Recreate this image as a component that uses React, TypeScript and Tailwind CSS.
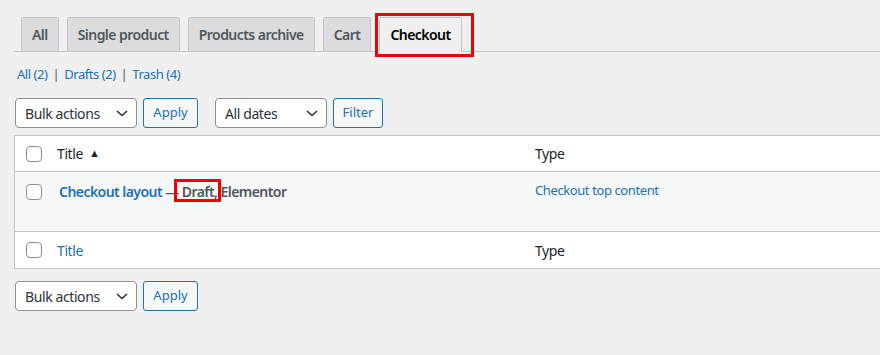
import React from "react";

const font = { fontFamily: '"Noto Sans", "Open Sans", sans-serif' };

function Chevron() {
  return (
    <svg width="12" height="12" viewBox="0 0 12 12" className="text-[#2c3338]">
      <path d="M1 4l5 4.5L11 4" fill="none" stroke="currentColor" strokeWidth="1.6" />
    </svg>
  );
}

function Select({ label, width }: { label: string; width: string }) {
  return (
    <div
      className={`${width} h-[30px] flex items-center justify-between pl-[9px] pr-[8px] bg-white border border-[#8c8f94] rounded-[4px] text-[14px] tracking-[-0.4px] text-[#2c3338]`}
    >
      <span>{label}</span>
      <Chevron />
    </div>
  );
}

function Button({ label, width }: { label: string; width: string }) {
  return (
    <div
      className={`${width} h-[30px] flex items-center justify-center bg-[#f6f7f7] border border-[#2271b1] rounded-[3px] text-[13px] text-[#2271b1]`}
    >
      {label}
    </div>
  );
}

function Checkbox() {
  return <div className="w-4 h-4 rounded-[4px] border border-[#8c8f94] bg-white" />;
}

function Tab({ label, active }: { label: string; active?: boolean }) {
  return (
    <div
      className={`relative h-[35px] px-[10px] flex items-center border border-[#c3c4c7] rounded-t-[2px] text-[14px] font-semibold tracking-[-0.55px] ${
        active ? "bg-[#f0f0f1] border-b-[#f0f0f1] text-black" : "bg-[#dcdcde] text-[#50575e]"
      } mb-[-1px]`}
    >
      {label}
      {active && (
        <div className="absolute left-[-5px] top-[-5px] w-[99px] h-[44px] border-[3px] border-[#f00000]" />
      )}
    </div>
  );
}

export default function App() {
  return (
    <div className="w-[880px] h-[355px] bg-[#f0f0f1] overflow-hidden" style={font}>
      <div className="pl-[14px] pt-[17px]">
        <div className="flex gap-[8px] pl-[7px] border-b border-[#c3c4c7]">
          <Tab label="All" />
          <Tab label="Single product" />
          <Tab label="Products archive" />
          <Tab label="Cart" />
          <Tab label="Checkout" active />
        </div>
      </div>

      <div className="pl-[17px] mt-[12px] text-[13px] leading-[20px] tracking-[-0.45px] text-[#50575e] flex gap-[5px]">
        <span className="text-[#2271b1]">All (2)</span>
        <span>|</span>
        <span className="text-[#2271b1]">Drafts (2)</span>
        <span>|</span>
        <span className="text-[#2271b1]">Trash (4)</span>
      </div>

      <div className="pl-[15px] mt-[14px] flex items-center">
        <Select label="Bulk actions" width="w-[122px]" />
        <div className="w-[6px]" />
        <Button label="Apply" width="w-[55px]" />
        <div className="w-[17px]" />
        <Select label="All dates" width="w-[112px]" />
        <div className="w-[6px]" />
        <Button label="Filter" width="w-[50px]" />
      </div>

      <div className="ml-[14px] mt-[7px] w-[900px] border border-[#c3c4c7] bg-white text-[14px] tracking-[-0.4px]">
        <div className="h-[36px] flex items-center border-b border-[#c3c4c7]">
          <div className="w-[42px] pl-[11px]">
            <Checkbox />
          </div>
          <div className="w-[478px] text-[#1d2327] flex items-center gap-[6px]">
            <span>Title</span>
            <span className="text-[11px]">▲</span>
          </div>
          <div className="text-[#1d2327]">Type</div>
        </div>
        <div className="h-[60px] bg-[#f6f7f7] border-b border-[#c3c4c7] flex items-start pt-[9px]">
          <div className="w-[42px] pl-[11px] pt-[3px]">
            <Checkbox />
          </div>
          <div className="w-[478px] pl-[2px] font-semibold tracking-[-0.55px] text-[#50575e] whitespace-nowrap">
            <span className="text-[#2271b1]">Checkout layout</span>
            <span> — </span>
            <span className="relative">
              Draft,
              <span className="absolute left-[-8px] top-[-3px] w-[47px] h-[23px] border-[3px] border-[#f00000]" />
            </span>
            <span> Elementor</span>
          </div>
          <div className="text-[13px] text-[#2271b1]">Checkout top content</div>
        </div>
        <div className="h-[36px] flex items-center">
          <div className="w-[42px] pl-[11px]">
            <Checkbox />
          </div>
          <div className="w-[478px] text-[#2271b1]">Title</div>
          <div className="text-[#1d2327]">Type</div>
        </div>
      </div>

      <div className="pl-[15px] mt-[12px] flex items-center">
        <Select label="Bulk actions" width="w-[122px]" />
        <div className="w-[6px]" />
        <Button label="Apply" width="w-[55px]" />
      </div>
    </div>
  );
}
